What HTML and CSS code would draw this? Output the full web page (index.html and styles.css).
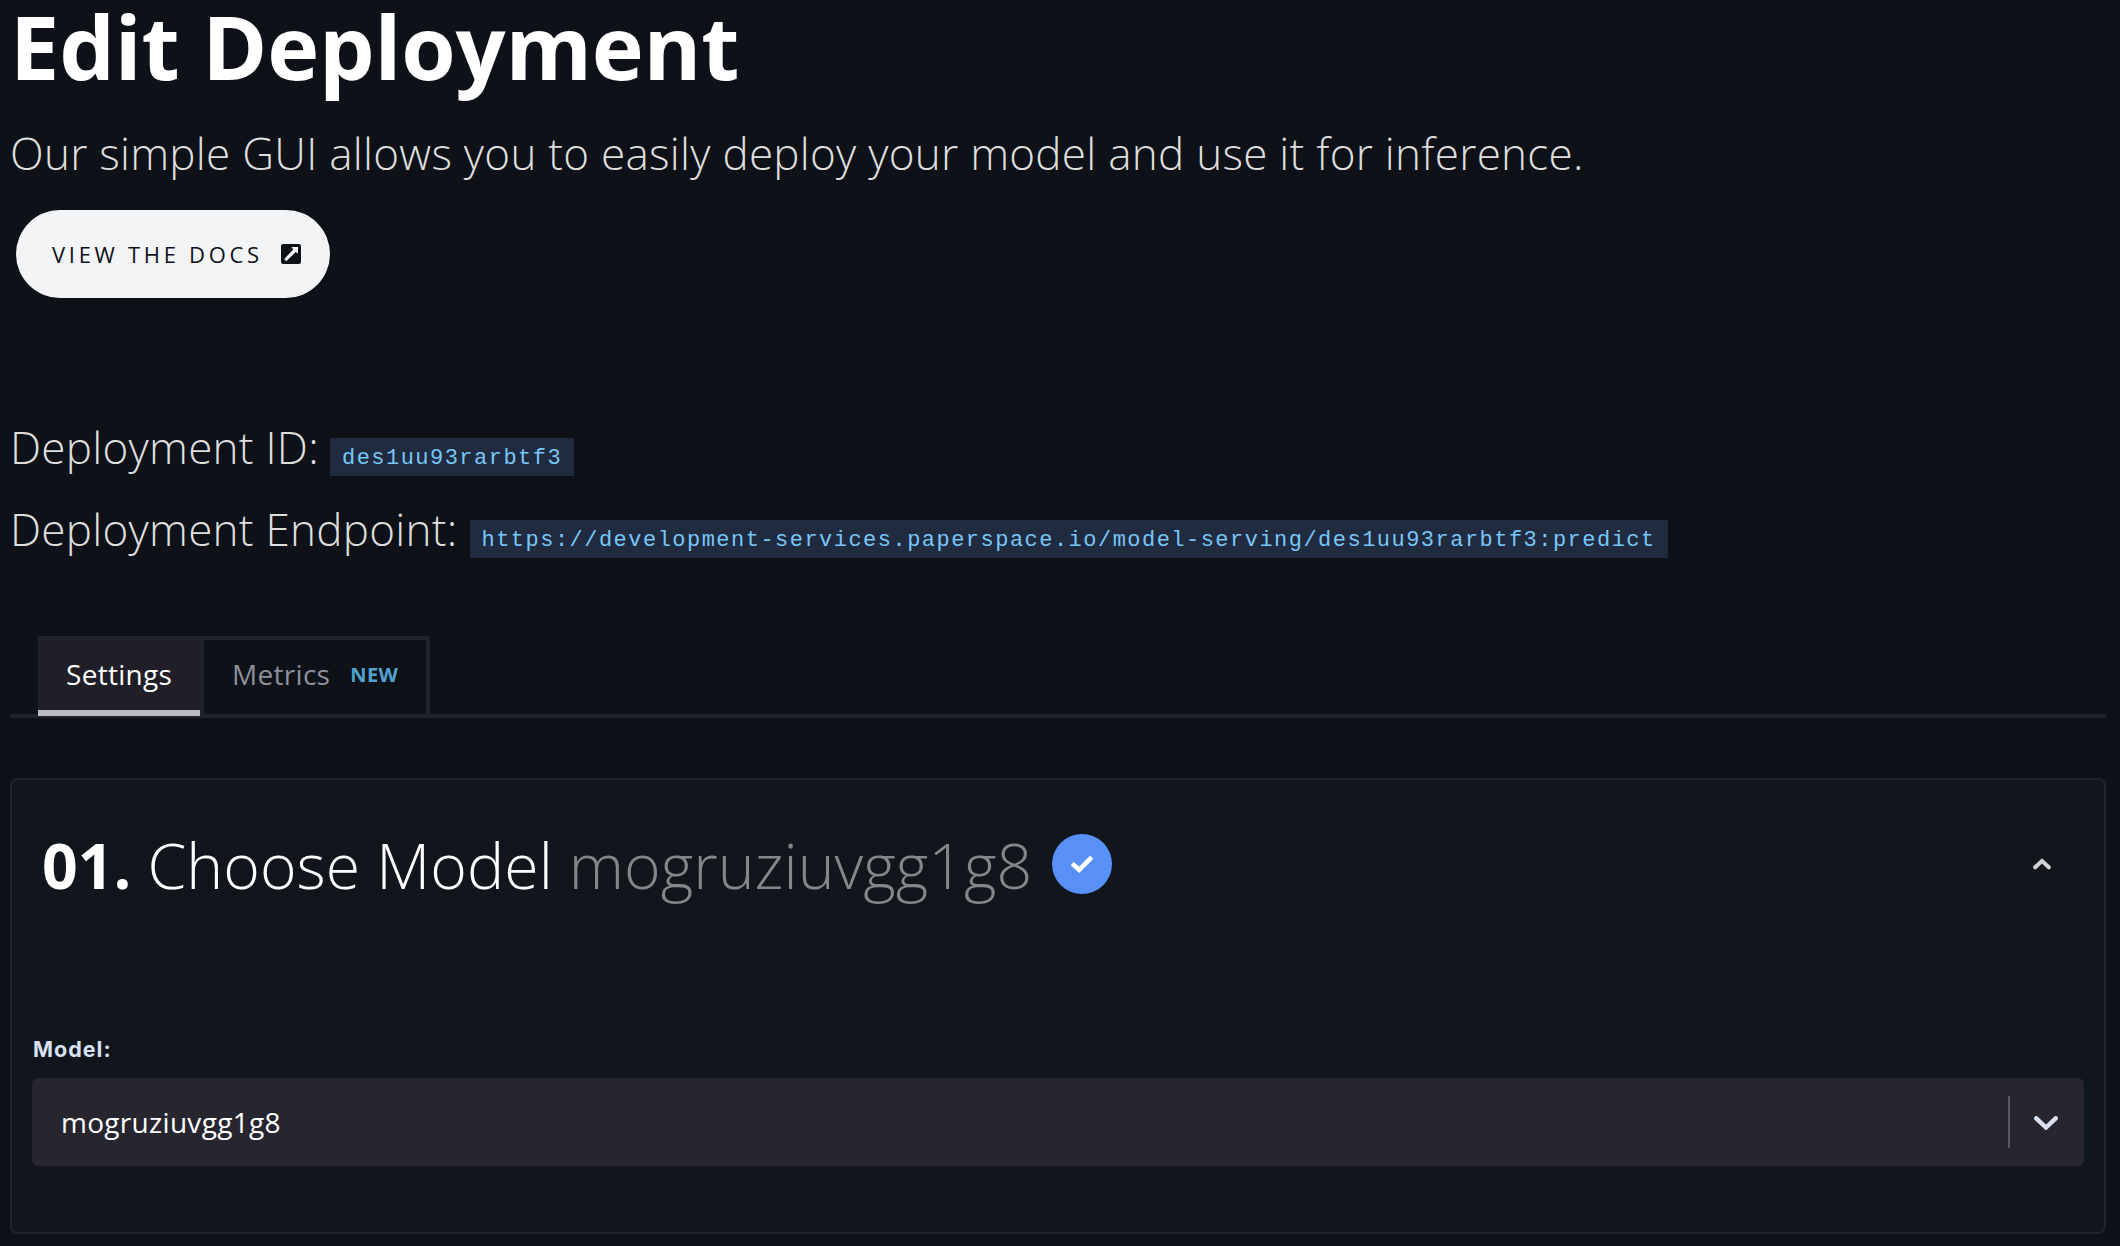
FILE: index.html
```html
<!DOCTYPE html>
<html lang="en">
<head>
<meta charset="utf-8">
<title>Edit Deployment</title>
<link rel="stylesheet" href="styles.css">
</head>
<body>
<main class="page">
  <h1 class="title">Edit Deployment</h1>
  <p class="subtitle">Our simple GUI allows you to easily deploy your model and use it for inference.</p>
  <a class="docs-button"><span>VIEW THE DOCS</span>
    <svg class="docs-icon" viewBox="0 0 20 20"><rect width="20" height="20" rx="2.2" fill="#0e1118"/><path d="M10.300 3h6.700v6.700l-2.300-1.800L5.300 17.200 3.200 15l9.100-9.600z" fill="#f3f4f6"/></svg>
  </a>

  <div class="detail detail-id"><span>Deployment ID:</span><code class="code">des1uu93rarbtf3</code></div>
  <div class="detail"><span>Deployment Endpoint:</span><code class="code">https://development-services.paperspace.io/model-serving/des1uu93rarbtf3:predict</code></div>

  <nav class="tabs">
    <a class="tab tab-active"><span>Settings</span></a>
    <a class="tab"><span>Metrics</span><span class="tag">NEW</span></a>
  </nav>

  <section class="card">
    <header class="card-head">
      <h2 class="card-title"><b>01.</b><span>Choose Model</span><span class="muted">mogruziuvgg1g8</span></h2>
      <span class="done"><svg viewBox="0 0 24 18" width="24" height="18"><path d="M2.200 8.600l7 6.200L21.800 2.200" fill="none" stroke="#fff" stroke-width="4.600"/></svg></span>
      <svg class="collapse" viewBox="0 0 18 12" width="18" height="12"><path d="M2.200 9.300L9 2.900l6.800 6.400" fill="none" stroke="#d2d3d5" stroke-width="4" stroke-linecap="round"/></svg>
    </header>
    <label class="label">Model:</label>
    <div class="select">
      <span>mogruziuvgg1g8</span>
      <span class="arrow"><svg viewBox="0 0 24 14" width="24" height="14"><path d="M2.300 2.300L12 11.500l9.700-9.200" fill="none" stroke="#d8e0f2" stroke-width="4.400" stroke-linecap="round"/></svg></span>
    </div>
  </section>
</main>
</body>
</html>
```
FILE: styles.css
```css
* { box-sizing: border-box; margin: 0; padding: 0; }
body { background: #0e1118; color: #fff; font-family: "Open Sans", sans-serif; }
.page { padding: 0 14px 0 10px; display: flex; flex-direction: column; align-items: flex-start; }
.title { font-size: 88px; line-height: 92px; font-weight: 700; letter-spacing: -0.15px; white-space: nowrap; }
.subtitle { margin-top: 31px; font-size: 44px; line-height: 60px; font-weight: 300; letter-spacing: 0.27px; color: #dedede; white-space: nowrap; }
.docs-button { margin: 27px 0 0 6px; width: 314px; height: 88px; padding-left: 36px; border-radius: 44px; background: #f3f4f6; color: #0e1118; display: flex; align-items: center; font-size: 22px; letter-spacing: 3.7px; white-space: nowrap; }
.docs-icon { width: 20px; height: 20px; margin-left: 18.5px; flex: none; }
.detail { margin-top: 22px; height: 60px; display: flex; align-items: baseline; font-size: 44px; line-height: 60px; font-weight: 300; letter-spacing: 0.27px; color: #dedede; white-space: nowrap; }
.detail-id { margin-top: 119px; }
.code { height: 38px; margin-left: 12px; padding: 3px 12px 0; background: #212b40; color: #78c6f7; font: 22px/35px "Liberation Mono", monospace; letter-spacing: 1.475px; }
.detail-id .code { margin-left: 11px; }
.tabs { align-self: stretch; margin-top: 77px; height: 82px; padding-left: 28px; display: flex; border-bottom: 4px solid #20222e; }
.tab { position: relative; border: solid #20222e; border-width: 4px 4px 0 0; height: 78px; width: 226px; padding: 0 0 6px 28px; display: flex; align-items: center; font-size: 28px; letter-spacing: 0.3px; color: #8d8f9b; }
.tab-active { width: 166px; background: #201f28; color: #fff; }
.tab-active::after { content: ""; position: absolute; left: 0; right: 0; bottom: -2px; height: 6px; background: #bbb8c8; }
.tag { font-size: 20px; font-weight: 700; letter-spacing: 0.4px; color: #52a2cd; margin-left: 20px; padding-top: 1px; }
.card { align-self: stretch; margin-top: 60px; height: 456px; border: 2px solid #20242c; border-radius: 8px; background: #11161d; padding: 0 20px; }
.card-head { display: flex; align-items: center; height: 168px; padding-left: 10px; }
.card-title { font-size: 62.5px; font-weight: 300; display: flex; gap: 16px; letter-spacing: 0.04px; white-space: nowrap; }
.card-title b { font-weight: 700; }
.muted { color: #85868a; }
.done { width: 60px; height: 60px; border-radius: 50%; background: #5990f8; display: flex; align-items: center; justify-content: center; margin-left: 20px; }
.collapse { margin-left: auto; margin-right: 33px; }
.label { display: block; margin-top: 86px; padding-left: 1px; font: 700 21.5px/30px Inter, sans-serif; letter-spacing: 1px; color: #d8e0f2; }
.select { margin-top: 14px; height: 88px; border-radius: 6px; background: #27262f; display: flex; align-items: center; padding-left: 29px; font-size: 28px; letter-spacing: 0.3px; }
.arrow { margin-left: auto; border-left: 2px solid #5b5966; height: 52px; width: 76px; padding: 2px 2px 0 0; display: flex; align-items: center; justify-content: center; }
```
